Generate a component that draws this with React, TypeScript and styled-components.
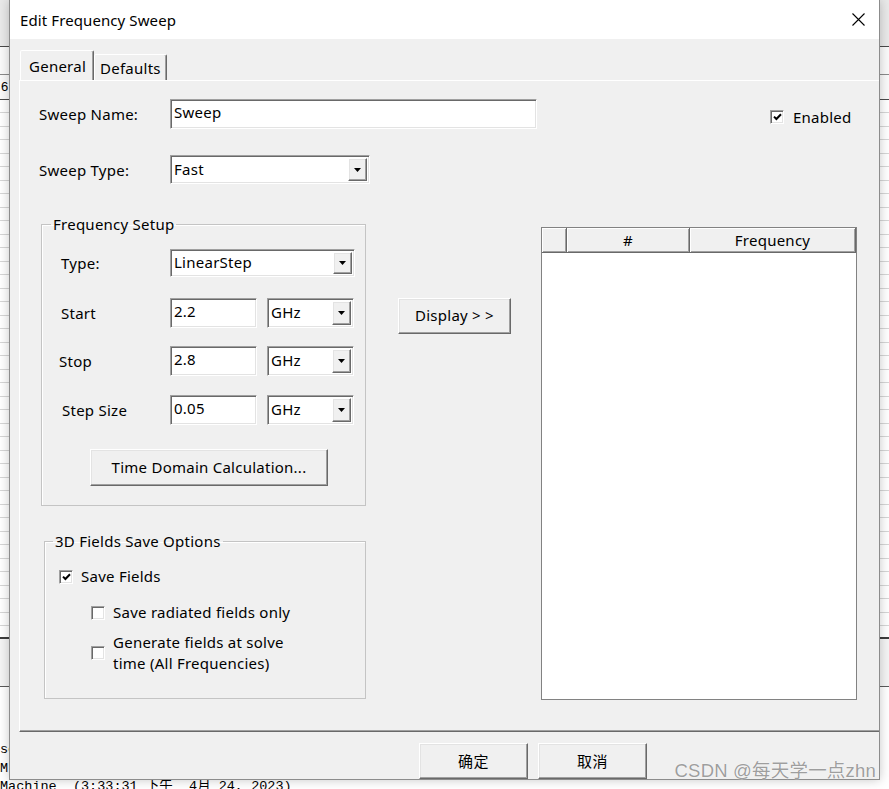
import React from "react";
import styled, { createGlobalStyle, css } from "styled-components";

const GlobalStyle = createGlobalStyle`
  html, body { margin: 0; padding: 0; }
  body {
    width: 889px; height: 789px; overflow: hidden;
    font-family: "Noto Sans", "Noto Sans CJK SC", sans-serif;
    color: #000;
  }
  * { box-sizing: border-box; }
`;

const sunken = css`
  border: 1px solid;
  border-color: #a0a0a0 #ffffff #ffffff #a0a0a0;
  box-shadow: inset 1px 1px 0 #696969, inset -1px -1px 0 #e3e3e3;
`;

const raised = css`
  border: 1px solid;
  border-color: #ffffff #696969 #696969 #ffffff;
  box-shadow: inset -1px -1px 0 #a0a0a0, inset 1px 1px 0 #e3e3e3;
`;

/* ---------- background application behind the dialog ---------- */
const Desktop = styled.div`
  position: relative;
  width: 889px;
  height: 789px;
  overflow: hidden;
  background: #f0f0f0;
  display: flex;
  flex-direction: column;
  & > * { flex-shrink: 0; }
`;

const BgToolbar = styled.div`
  height: 47px;
  background: #e9e9e9;
  border-bottom: 1px solid #4a4a4a;
`;

const BgHeaderRow = styled.div`
  height: 28px;
  background: #fafafa;
  border-bottom: 1px solid #8a8a8a;
`;

const BgLabelRow = styled.div`
  height: 25px;
  background: #fafafa;
  border-bottom: 1px solid #4a4a4a;
  font: 13px "Liberation Sans", sans-serif;
  line-height: 24px;
  padding-left: 1px;
`;

const BgGrid = styled.div`
  height: 539px;
  background: repeating-linear-gradient(
    to bottom,
    #ffffff 0,
    #ffffff 12.5px,
    #d6d6d6 12.5px,
    #d6d6d6 13.5px
  );
  border-bottom: 2px solid #3c3c3c;
`;

const BgGap = styled.div`
  height: 48px;
  background: #f4f4f4;
  border-bottom: 1px solid #5a5a5a;
`;

const BgLog = styled.div`
  background: #ffffff;
  padding-top: 54px;
  font: 13.5px "Liberation Mono", "Noto Sans CJK SC", monospace;
  line-height: 18.5px;
  white-space: pre;
  color: #000;
`;

/* ---------- dialog window ---------- */
const Window = styled.div`
  position: absolute;
  left: 9px;
  top: 0;
  width: 871px;
  height: 780px;
  background: #f0f0f0;
  border: 1px solid #8c8c8c;
  border-top: 0;
  box-shadow: 0 0 10px rgba(0, 0, 0, 0.22);
  display: flex;
  flex-direction: column;
  overflow: hidden;
  letter-spacing: 0.25px;
`;

const TitleBar = styled.div`
  height: 39px;
  flex: none;
  background: #ffffff;
  display: flex;
  align-items: center;
  padding-left: 10px;
`;

const Title = styled.span`
  font-size: 15px;
  color: #000;
  letter-spacing: 0.1px;
`;

const CloseButton = styled.span`
  margin-left: auto;
  margin-right: 14px;
  width: 13px;
  height: 13px;
  display: flex;
`;

const Body = styled.div`
  flex: 1;
  display: flex;
  flex-direction: column;
  padding-left: 9px;
`;

const TabStrip = styled.div`
  height: 41px;
  padding-top: 11px;
  padding-left: 1px;
  display: flex;
  align-items: flex-end;
`;

const Tab = styled.div<{ $active?: boolean }>`
  height: ${(p) => (p.$active ? 30 : 26)}px;
  padding: ${(p) => (p.$active ? "0 7px 0 8px" : "0 5px 0 5px")};
  display: flex;
  align-items: center;
  font-size: 15px;
  border: 1px solid;
  border-bottom: 0;
  border-color: #ffffff #696969 transparent #ffffff;
  box-shadow: inset -1px 0 0 #a0a0a0;
  border-radius: 2px 2px 0 0;
  background: #f0f0f0;
`;

const TabPanel = styled.div`
  height: 652px;
  border-top: 1px solid #ffffff;
  border-left: 1px solid #ffffff;
  border-bottom: 1px solid #696969;
  box-shadow: inset 0 -1px 0 #a0a0a0;
  padding: 18px 0 0 19px;
  display: flex;
  flex-direction: column;
`;

const Row = styled.div<{ $top?: number; $indent?: number }>`
  display: flex;
  align-items: center;
  margin-top: ${(p) => p.$top ?? 0}px;
  margin-left: ${(p) => p.$indent ?? 0}px;
`;

const Label = styled.span<{ $w: number }>`
  width: ${(p) => p.$w}px;
  flex: none;
  font-size: 15px;
  white-space: nowrap;
`;

const TextBox = styled.input<{ $w: number; $h?: number }>`
  width: ${(p) => p.$w}px;
  height: ${(p) => p.$h ?? 30}px;
  flex: none;
  ${sunken};
  background: #ffffff;
  font: 15px "Noto Sans", sans-serif;
  letter-spacing: 0.25px;
  color: #000;
  padding: 0 0 4px 3px;
  outline: none;
  margin: 0;
`;

const Combo = styled.div<{ $w: number; $h?: number; $gap?: number }>`
  width: ${(p) => p.$w}px;
  height: ${(p) => p.$h ?? 30}px;
  margin-left: ${(p) => p.$gap ?? 0}px;
  flex: none;
  ${sunken};
  background: #ffffff;
  display: flex;
  align-items: stretch;
  padding: 2px;
`;

const ComboText = styled.span`
  flex: 1;
  font-size: 15px;
  display: flex;
  align-items: center;
  padding-left: 1px;
  padding-bottom: 2px;
`;

const ComboArrow = styled.span`
  width: 19px;
  flex: none;
  ${raised};
  background: #f0f0f0;
  display: flex;
  align-items: center;
  justify-content: center;
`;

const Arrow = () => (
  <svg width="7" height="4" viewBox="0 0 7 4">
    <path d="M0 0 H7 L3.5 4 Z" fill="#000" />
  </svg>
);

const CheckItem = styled.div<{ $top?: number; $gap?: number; $left?: number }>`
  display: flex;
  align-items: center;
  margin-top: ${(p) => p.$top ?? 0}px;
  margin-left: ${(p) => p.$left ?? 0}px;
  gap: ${(p) => p.$gap ?? 8}px;
  font-size: 15px;
  line-height: 21px;
`;

const CheckBox = styled.span`
  width: 14px;
  height: 14px;
  flex: none;
  background: #ffffff;
  ${sunken};
  display: flex;
  align-items: center;
  justify-content: center;
`;

const Tick = () => (
  <svg width="9" height="8" viewBox="0 0 9 8">
    <path d="M1 3.6 L3.4 6 L8 1.2" stroke="#000" strokeWidth="2" fill="none" />
  </svg>
);

const MainArea = styled.div`
  display: flex;
  align-items: flex-start;
  margin-top: 31px;
`;

const LeftColumn = styled.div`
  display: flex;
  flex-direction: column;
  margin-left: 2px;
  width: 325px;
  flex: none;
`;

const Group = styled.fieldset<{ $w: number; $top?: number; $left?: number }>`
  width: ${(p) => p.$w}px;
  margin: ${(p) => p.$top ?? 0}px 0 0 ${(p) => p.$left ?? 0}px;
  padding: 0;
  border: 1px solid #c4c4c4;
  box-shadow: inset 1px 1px 0 #ffffff;
  min-inline-size: 0;
`;

const Legend = styled.legend<{ $offset: number }>`
  margin-left: ${(p) => p.$offset}px;
  padding: 0 2px;
  font-size: 15px;
  line-height: 18px;
`;

const GroupBody = styled.div<{ $pad: string }>`
  padding: ${(p) => p.$pad};
  display: flex;
  flex-direction: column;
`;

const PushButton = styled.div<{ $w: number; $h: number; $top?: number; $left?: number }>`
  width: ${(p) => p.$w}px;
  height: ${(p) => p.$h}px;
  margin-top: ${(p) => p.$top ?? 0}px;
  margin-left: ${(p) => p.$left ?? 0}px;
  flex: none;
  ${raised};
  background: #f0f0f0;
  display: flex;
  align-items: center;
  justify-content: center;
  font-size: 15px;
  padding-bottom: 2px;
  white-space: pre;
`;

const Table = styled.div`
  width: 316px;
  height: 473px;
  margin-left: 30px;
  margin-top: 12px;
  flex: none;
  background: #ffffff;
  border: 1px solid #828282;
  display: flex;
  flex-direction: column;
`;

const HeaderRow = styled.div`
  display: flex;
  height: 25px;
  border-bottom: 1px solid #696969;
`;

const HeaderCell = styled.div<{ $w?: number }>`
  ${(p) => (p.$w ? `width: ${p.$w}px; flex: none;` : "flex: 1;")}
  background: #f0f0f0;
  border-right: 1px solid #696969;
  box-shadow: inset 1px 1px 0 #ffffff, inset -1px -1px 0 #a0a0a0;
  text-align: center;
  font-size: 15px;
  line-height: 24px;
`;

const ButtonBar = styled.div`
  display: flex;
  gap: 10px;
  padding-top: 11px;
  padding-left: 400px;
`;

const DialogButton = styled(PushButton)`
  font-size: 15px;
  letter-spacing: 0.5px;
`;

const Watermark = styled.div`
  position: absolute;
  right: 13px;
  bottom: 7px;
  font: 18.5px "Liberation Sans", "Noto Sans CJK SC", sans-serif;
  color: #9e9e9e;
  text-shadow: 0 0 1px #ffffff, 0 0 1px #ffffff;
  white-space: nowrap;
  letter-spacing: 0.2px;
`;

export default function App() {
  return (
    <>
      <GlobalStyle />
      <Desktop>
        <BgToolbar />
        <BgHeaderRow />
        <BgLabelRow>6</BgLabelRow>
        <BgGrid />
        <BgGap />
        <BgLog>{"se\nM:\nMachine  (3:33:31 下午  4月 24, 2023)"}</BgLog>

        <Window>
          <TitleBar>
            <Title>Edit Frequency Sweep</Title>
            <CloseButton>
              <svg width="13" height="13" viewBox="0 0 13 13">
                <path d="M0.5 0.5 L12.5 12.5 M12.5 0.5 L0.5 12.5" stroke="#000" strokeWidth="1.1" />
              </svg>
            </CloseButton>
          </TitleBar>
          <Body>
            <TabStrip>
              <Tab $active>General</Tab>
              <Tab>Defaults</Tab>
            </TabStrip>
            <TabPanel>
              <Row>
                <Label $w={131}>Sweep Name:</Label>
                <TextBox $w={367} defaultValue="Sweep" readOnly />
                <CheckItem $left={233} $gap={9} $top={6}>
                  <CheckBox>
                    <Tick />
                  </CheckBox>
                  Enabled
                </CheckItem>
              </Row>
              <Row $top={26}>
                <Label $w={131}>Sweep Type:</Label>
                <Combo $w={200} $h={29}>
                  <ComboText>Fast</ComboText>
                  <ComboArrow>
                    <Arrow />
                  </ComboArrow>
                </Combo>
              </Row>

              <MainArea>
                <LeftColumn>
                  <Group $w={325}>
                    <Legend $offset={9}>Frequency Setup</Legend>
                    <GroupBody $pad="16px 0 19px 19px">
                      <Row>
                        <Label $w={109}>Type:</Label>
                        <Combo $w={185} $h={28}>
                          <ComboText>LinearStep</ComboText>
                          <ComboArrow>
                            <Arrow />
                          </ComboArrow>
                        </Combo>
                      </Row>
                      <Row $top={21}>
                        <Label $w={109}>Start</Label>
                        <TextBox $w={87} defaultValue="2.2" readOnly />
                        <Combo $w={87} $gap={10}>
                          <ComboText>GHz</ComboText>
                          <ComboArrow>
                            <Arrow />
                          </ComboArrow>
                        </Combo>
                      </Row>
                      <Row $top={18} $indent={-2}>
                        <Label $w={111}>Stop</Label>
                        <TextBox $w={87} defaultValue="2.8" readOnly />
                        <Combo $w={87} $gap={10}>
                          <ComboText>GHz</ComboText>
                          <ComboArrow>
                            <Arrow />
                          </ComboArrow>
                        </Combo>
                      </Row>
                      <Row $top={19} $indent={1}>
                        <Label $w={108}>Step Size</Label>
                        <TextBox $w={87} defaultValue="0.05" readOnly />
                        <Combo $w={87} $gap={10}>
                          <ComboText>GHz</ComboText>
                          <ComboArrow>
                            <Arrow />
                          </ComboArrow>
                        </Combo>
                      </Row>
                      <PushButton $w={238} $h={37} $top={24} $left={29}>
                        Time Domain Calculation...
                      </PushButton>
                    </GroupBody>
                  </Group>

                  <Group $w={322} $top={26} $left={3}>
                    <Legend $offset={8}>3D Fields Save Options</Legend>
                    <GroupBody $pad="16px 0 24px 14px">
                      <CheckItem>
                        <CheckBox>
                          <Tick />
                        </CheckBox>
                        Save Fields
                      </CheckItem>
                      <CheckItem $top={15} $left={32}>
                        <CheckBox />
                        Save radiated fields only
                      </CheckItem>
                      <CheckItem $top={9} $left={32}>
                        <CheckBox />
                        <span>
                          Generate fields at solve
                          <br />
                          time (All Frequencies)
                        </span>
                      </CheckItem>
                    </GroupBody>
                  </Group>
                </LeftColumn>

                <PushButton $w={113} $h={36} $top={83} $left={32}>
                  {"Display > >"}
                </PushButton>

                <Table>
                  <HeaderRow>
                    <HeaderCell $w={25} />
                    <HeaderCell $w={123}>#</HeaderCell>
                    <HeaderCell>Frequency</HeaderCell>
                  </HeaderRow>
                </Table>
              </MainArea>
            </TabPanel>
            <ButtonBar>
              <DialogButton $w={109} $h={36}>确定</DialogButton>
              <DialogButton $w={109} $h={36}>取消</DialogButton>
            </ButtonBar>
          </Body>
        </Window>

        <Watermark>CSDN @每天学一点zhn</Watermark>
      </Desktop>
    </>
  );
}
